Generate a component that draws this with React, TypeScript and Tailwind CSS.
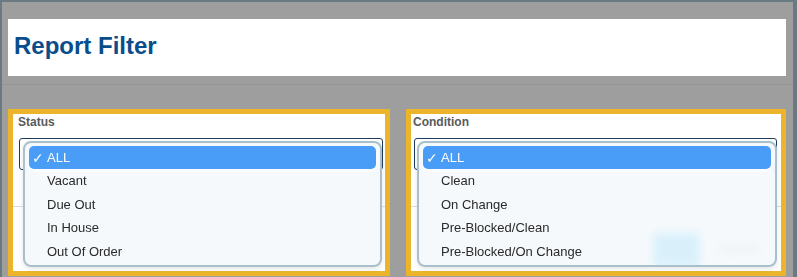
const statusOptions = ["ALL", "Vacant", "Due Out", "In House", "Out Of Order"];
const conditionOptions = ["ALL", "Clean", "On Change", "Pre-Blocked/Clean", "Pre-Blocked/On Change"];

type PanelProps = {
  label: string;
  options: string[];
  labelClass: string;
  selectClass: string;
  menuClass: string;
  widthClass: string;
  footer?: boolean;
};

function OpenSelect({ label, options, labelClass, selectClass, menuClass, widthClass, footer }: PanelProps) {
  return (
    <div className={`h-[167px] border-[5px] border-[#ebb42a] bg-white ${widthClass}`}>
      <div className="relative h-full">
        <p className={`text-[12px] font-bold leading-[16px] text-[#5a5a5a] ${labelClass}`}>{label}</p>
        <div className={`mt-[8px] h-[32px] rounded-[3px] border border-[#1f3b5a] bg-white ${selectClass}`} />
        <div className="mt-[36px] border-t border-[#dcdcdc]" />
        {footer ? (
          <div className="mt-[26px] flex items-center">
            <div className="ml-[242px] h-[32px] w-[47px] rounded-[4px] bg-[#45c2f8]" />
            <span className="ml-[19px] text-[13px] text-[#8a8a8a]">Cancel</span>
          </div>
        ) : null}
        <div
          className={`absolute top-[27px] bottom-[4px] rounded-[8px] border-2 border-[#a8bfcc] bg-[#f3f8fc]/85 px-[4px] pt-[3px] shadow-[0_2px_5px_rgba(0,0,0,0.1)] backdrop-blur-[5px] ${menuClass}`}
        >
          {options.map((option, index) =>
            index === 0 ? (
              <div
                key={option}
                className="relative flex h-[23px] items-center rounded-[5px] bg-[#4a9df6] pl-[18px] text-[13px] text-white shadow-[0_3px_6px_rgba(255,255,255,0.9)]"
              >
                <span className="absolute left-[3px] top-[2px] text-[14px]">✓</span>
                {option}
              </div>
            ) : (
              <div key={option} className="flex h-[23.5px] items-center pl-[18px] text-[13px] text-[#2a2a2a]">
                {option}
              </div>
            ),
          )}
        </div>
      </div>
    </div>
  );
}

export default function App() {
  return (
    <div
      className="h-[277px] w-[797px] overflow-hidden border-t-2 border-l-2 border-r-4 border-[#6a7a82] bg-[#9e9e9e]"
      style={{ fontFamily: '"Liberation Sans", Arial, sans-serif' }}
    >
      <div className="ml-[6px] mt-[17px] h-[57px] w-[778px] bg-white pl-[6px] pt-[13px]">
        <h1 className="text-[24px] font-bold leading-[28px] text-[#0a4d8c]">Report Filter</h1>
      </div>
      <div className="h-[33px] pt-[8px]">
        <div className="border-t border-[#969696]" />
      </div>
      <div className="ml-[6px] flex gap-[16px]">
        <OpenSelect
          label="Status"
          options={statusOptions}
          widthClass="w-[382px]"
          labelClass="pl-[5px]"
          selectClass="ml-[6px] w-[364px]"
          menuClass="left-[10px] right-[3px]"
        />
        <OpenSelect
          label="Condition"
          options={conditionOptions}
          widthClass="w-[380px]"
          labelClass="pl-[2px]"
          selectClass="ml-[3px] w-[363px]"
          menuClass="left-[6px] right-[4px]"
          footer
        />
      </div>
    </div>
  );
}
